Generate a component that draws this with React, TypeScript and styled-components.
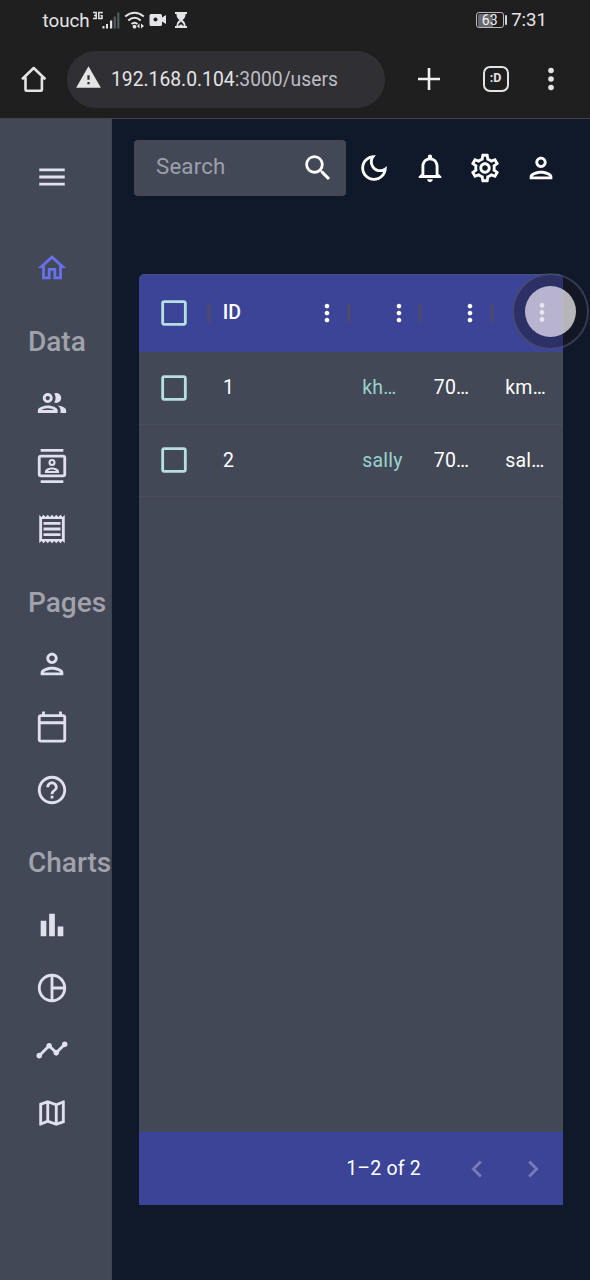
import React from "react";
import styled, { createGlobalStyle } from "styled-components";
import {
  MdMenu, MdOutlineHome, MdOutlinePeople, MdOutlineContacts, MdOutlineReceipt,
  MdOutlinePerson, MdOutlineCalendarToday, MdHelpOutline, MdBarChart,
  MdTimeline, MdOutlineMap, MdSearch, MdNotificationsNone,
  MdOutlineSettings, MdMoreVert, MdCheckBoxOutlineBlank,
  MdChevronLeft, MdChevronRight, MdWarning,
} from "react-icons/md";

const Global = createGlobalStyle`
  * { box-sizing: border-box; }
  body { margin: 0; background: #101929; font-family: Roboto, "Noto Sans", sans-serif; }
  svg { display: block; flex: none; }
`;

const Screen = styled.div`
  width: 590px;
  height: 1280px;
  display: flex;
  flex-direction: column;
  position: relative;
  overflow: hidden;
`;

const PhoneTop = styled.header`
  height: 119px;
  flex: none;
  background: #1f1f1f;
  border-bottom: 1px solid #45424b;
`;

const StatusBar = styled.div`
  height: 40px;
  display: flex;
  align-items: center;
  padding: 0 43px 0 42.5px;
  color: #e4e4e6;
  font-size: 19.6px;
`;

const Carrier = styled.span`
  font-size: 18.8px;
  padding-top: 1px;
`;

const Network = styled.svg`
  margin-left: 2px;
`;

const Clock = styled.span`
  margin-left: 4.5px;
  font-size: 18.6px;
`;

const Battery = styled.div`
  margin-left: auto;
  width: 28px;
  height: 16px;
  border: 1.3px solid #b9b9bd;
  border-radius: 3px;
  font-size: 14px;
  line-height: 13.5px;
  text-align: center;
  color: #f0f0f2;
  background: linear-gradient(90deg, #6a6a6e 63%, transparent 63%);
  background-clip: content-box;
  padding: 0.5px;
`;

const BatteryTip = styled.span`
  width: 2px;
  height: 10px;
  margin-left: 1px;
  border-radius: 1px;
  background: #d4d4d8;
`;

const BrowserBar = styled.div`
  height: 78px;
  display: flex;
  align-items: center;
  padding: 0 29px 0 20px;
  color: #e4e4e6;
`;

const HomeIcon = styled.svg`
  margin-bottom: 3px;
`;

const Address = styled.div`
  width: 318px;
  height: 57px;
  margin-left: 19px;
  padding-left: 8px;
  border-radius: 29px;
  background: #303034;
  display: flex;
  align-items: center;
  gap: 9px;
  font-size: 19.3px;
  svg { margin-bottom: 3px; }
`;

const Dim = styled.span`
  color: #bdbdc3;
`;

const Tabs = styled.div`
  width: 26px;
  height: 26px;
  margin-left: 42.5px;
  border: 2.6px solid #e4e4e6;
  border-radius: 7px;
  font-size: 12.5px;
  font-weight: 700;
  line-height: 19px;
  text-align: center;
`;

const Plus = styled.svg`
  margin-left: 33px;
`;

const Dots = styled.svg`
  margin-left: auto;
  margin-right: 6px;
`;

const Body = styled.div`
  flex: 1;
  display: flex;
  min-height: 0;
`;

const Sidebar = styled.nav`
  width: 112px;
  flex: none;
  background: #434856;
  border-right: 1px solid #3c4250;
  color: #e0e0ee;
  padding-top: 26.4px;
  overflow: hidden;
`;

const NavItem = styled.div<{ $active?: boolean; $first?: boolean }>`
  height: 62.7px;
  width: 104px;
  margin-bottom: ${(p) => (p.$first ? "28.6px" : "0")};
  display: flex;
  align-items: center;
  justify-content: center;
  color: ${(p) => (p.$active ? "#6870ee" : "inherit")};
`;

const NavHeading = styled.h6`
  margin: 0;
  height: 72.7px;
  padding: 5.4px 0 0 28px;
  font-size: 28px;
  font-weight: 500;
  line-height: 74px;
  color: #a1a2ac;
`;

const Main = styled.main`
  flex: 1;
  min-width: 0;
`;

const Topbar = styled.div`
  display: flex;
  align-items: center;
  padding: 21px 22px 0;
  color: #fff;
`;

const SearchBox = styled.div`
  width: 212px;
  flex: none;
  height: 56px;
  border-radius: 4px;
  background: #434856;
  display: flex;
  align-items: center;
  justify-content: space-between;
  padding: 0 11px 0 22px;
  font-size: 22.3px;
  letter-spacing: 0.15px;
  color: #9d9fac;
  svg { color: #fff; }
`;

const SearchLabel = styled.span`
  padding-bottom: 4px;
`;

const IconButton = styled.span<{ $dim?: boolean }>`
  width: 55.75px;
  height: 55.75px;
  flex: none;
  display: flex;
  align-items: center;
  justify-content: center;
  color: ${(p) => (p.$dim ? "#777cb8" : "#fff")};
`;

const Grid = styled.section`
  width: 424px;
  height: 931px;
  margin: 78px 0 0 27px;
  display: flex;
  flex-direction: column;
  background: #434856;
  border-radius: 5.5px 5.5px 0 0;
  overflow: hidden;
  color: #fff;
  font-size: 19.5px;
  letter-spacing: 0.2px;
`;

const columns = "70.3px 139.4px 71.5px 71.5px 71.3px";

const HeadRow = styled.div`
  height: 78px;
  flex: none;
  display: grid;
  grid-template-columns: ${columns};
  background: #3c4497;
  border-top: 1px solid #4b4e83;
  padding-bottom: 2px;
  font-weight: 500;
`;

const HeadCell = styled.div`
  display: flex;
  align-items: center;
  justify-content: space-between;
  padding: 0 7.4px 0 0;
`;

const Separator = styled.i`
  width: 4px;
  height: 20px;
  margin: 0 auto 0 -2px;
  border-radius: 2px;
  background: #4a4875;
`;

const HeadLabel = styled.span`
  flex: 1;
  padding-left: 11.5px;
  letter-spacing: 0;
`;

const Row = styled.div`
  height: 72.5px;
  flex: none;
  display: grid;
  grid-template-columns: ${columns};
  align-items: center;
  border-bottom: 1px solid #4b4d5a;
`;

const CheckCell = styled.div`
  display: flex;
  align-items: center;
  justify-content: center;
  color: #b5dfe1;
`;

const Cell = styled.div<{ $accent?: boolean }>`
  padding: 0 13.6px;
  overflow: hidden;
  white-space: nowrap;
  color: ${(p) => (p.$accent ? "#98d3cd" : "#fff")};
`;

const GridFooter = styled.footer`
  margin-top: auto;
  height: 73px;
  display: flex;
  align-items: center;
  justify-content: flex-end;
  padding-right: 2.5px;
  background: #3c4497;
`;

const Range = styled.span`
  margin-right: 28px;
`;

const TouchHalo = styled.div`
  position: absolute;
  left: 512px;
  top: 273px;
  width: 77px;
  height: 77px;
  border-radius: 50%;
  border: 2px solid rgba(105, 105, 145, 0.42);
  background: rgba(24, 22, 32, 0.42);
  display: flex;
  align-items: center;
  justify-content: center;
`;

const TouchPoint = styled.div`
  width: 51px;
  height: 51px;
  border-radius: 50%;
  background: linear-gradient(90deg, rgba(219, 213, 234, 0.8) 73%, rgba(223, 221, 223, 0.8) 73%);
  display: flex;
  align-items: center;
  padding-left: 3px;
  color: rgba(240, 240, 250, 0.75);
`;

const ICON = 34;

const PieOutline = () => (
  <svg width={ICON} height={ICON} viewBox="0 0 24 24" fill="currentColor">
    <path d="M12 2C6.48 2 2 6.48 2 12s4.48 10 10 10 10-4.48 10-10S17.52 2 12 2zm1 2.07c3.61.45 6.48 3.33 6.93 6.93H13V4.07zM4 12c0-4.06 3.07-7.44 7-7.93v15.87c-3.93-.5-7-3.88-7-7.94zm9 7.93V13h6.93c-.45 3.61-3.32 6.48-6.93 6.93z" />
  </svg>
);

const Moon = () => (
  <svg width={ICON} height={ICON} viewBox="0 0 24 24" fill="currentColor">
    <path d="M9.37 5.51c-.18.64-.27 1.31-.27 1.99 0 4.08 3.32 7.4 7.4 7.4.68 0 1.35-.09 1.99-.27C17.45 17.19 14.93 19 12 19c-3.86 0-7-3.14-7-7 0-2.93 1.81-5.45 4.37-6.49zM12 3c-4.97 0-9 4.03-9 9s4.03 9 9 9 9-4.03 9-9c0-.46-.04-.92-.1-1.36-.98 1.37-2.58 2.26-4.4 2.26-2.98 0-5.4-2.42-5.4-5.4 0-1.81.89-3.42 2.26-4.4-.44-.06-.9-.1-1.36-.1z" />
  </svg>
);

const navGroups = [
  { title: "Data", icons: [MdOutlinePeople, MdOutlineContacts, MdOutlineReceipt] },
  { title: "Pages", icons: [MdOutlinePerson, MdOutlineCalendarToday, MdHelpOutline] },
  { title: "Charts", icons: [MdBarChart, PieOutline, MdTimeline, MdOutlineMap] },
];

const rows = [
  ["1", "kh…", "70…", "km…"],
  ["2", "sally", "70…", "sal…"],
];

export default function App() {
  return (
    <Screen>
      <Global />
      <PhoneTop>
        <StatusBar>
          <Carrier>touch</Carrier>
          <Network width="98" height="24" viewBox="0 0 98 24" fill="#e4e4e6">
            <g fill="none" stroke="#e4e4e6" strokeWidth="1.5">
              <path d="M1 4.5h3.200v6H1M2 7.500h2.200M10 5.500V4.500H6.800v6H10V7.800H8.500" />
            </g>
            <rect x="10.500" y="18" width="2" height="2.500" />
            <rect x="14" y="16" width="2" height="4.500" />
            <rect x="18" y="12.500" width="2.200" height="8" />
            <rect x="21.700" y="8.500" width="2.200" height="12" fill="#515c60" />
            <rect x="25.200" y="4.500" width="2.200" height="16" fill="#515c60" />
            <g fill="none" stroke="#e4e4e6" strokeWidth="2">
              <path d="M33.200 8.500q9.300-7.500 18.600 0M36.300 12.500q6.200-5.500 12.400 0M39.500 16q3-2.500 6 0" />
            </g>
            <circle cx="42.500" cy="18.700" r="1.900" />
            <path d="M47.500 15.500v5l-2.500-2.500zM49 15.500v5l3-2.500z" />
            <path fillRule="evenodd" d="M59 6h9.500q1.500 0 1.500 1.500v2l4-2.500v9l-4-2.500v3q0 1.500-1.500 1.500h-9.500q-1.500 0-1.500-1.500v-9q0-1.500 1.500-1.500zM63.500 9.500a2 2 0 1 0 .01 0z" />
            <path fillRule="evenodd" d="M83 4h12v2h-1.500q0 4-3 6 3 2 3 6H95v2H83v-2h1.500q0-4 3-6-3-2-3-6H83zM89 13.500q-2.800 2-2.800 4.700l2.800-2 2.800 2q0-2.700-2.800-4.700z" />
          </Network>
          <Battery>63</Battery>
          <BatteryTip />
          <Clock>7:31</Clock>
        </StatusBar>
        <BrowserBar>
          <HomeIcon width="28" height="28" viewBox="0 0 28 28" fill="none" stroke="#e4e4e6" strokeWidth="2.6" strokeLinejoin="round">
            <path d="M2 15.200 13.700 4l11.700 11.200M5.500 13.200v12.500q0 1 1 1h14.400q1 0 1-1V13.200" />
          </HomeIcon>
          <Address>
            <MdWarning size={27} />
            <span>192.168.0.104<Dim>:3000/users</Dim></span>
          </Address>
          <Plus width="22" height="24" viewBox="0 0 22 24" stroke="#f0f0f2" strokeWidth="2.6">
            <path d="M11 1v22M0 12h22" />
          </Plus>
          <Tabs>:D</Tabs>
          <Dots width="8" height="24" viewBox="0 0 8 24" fill="#e4e4e6">
            <circle cx="4" cy="3.5" r="2.800" />
            <circle cx="4" cy="12" r="2.800" />
            <circle cx="4" cy="20.500" r="2.800" />
          </Dots>
        </BrowserBar>
      </PhoneTop>
      <Body>
        <Sidebar>
          <NavItem $first><MdMenu size={ICON} /></NavItem>
          <NavItem $active><MdOutlineHome size={ICON} /></NavItem>
          {navGroups.map((group) => (
            <React.Fragment key={group.title}>
              <NavHeading>{group.title}</NavHeading>
              {group.icons.map((Icon, i) => (
                <NavItem key={i}><Icon size={ICON} /></NavItem>
              ))}
            </React.Fragment>
          ))}
        </Sidebar>
        <Main>
          <Topbar>
            <SearchBox><SearchLabel>Search</SearchLabel><MdSearch size={ICON} /></SearchBox>
            <IconButton><Moon /></IconButton>
            <IconButton><MdNotificationsNone size={ICON} /></IconButton>
            <IconButton><MdOutlineSettings size={ICON} /></IconButton>
            <IconButton><MdOutlinePerson size={ICON} /></IconButton>
          </Topbar>
          <Grid>
            <HeadRow>
              <CheckCell><MdCheckBoxOutlineBlank size={ICON} /></CheckCell>
              {["ID", "", "", ""].map((label, i) => (
                <HeadCell key={i}>
                  <Separator />
                  <HeadLabel>{label}</HeadLabel>
                  <MdMoreVert size={28} />
                </HeadCell>
              ))}
            </HeadRow>
            {rows.map((row) => (
              <Row key={row[0]}>
                <CheckCell><MdCheckBoxOutlineBlank size={ICON} /></CheckCell>
                {row.map((value, i) => (
                  <Cell key={i} $accent={i === 1}>{value}</Cell>
                ))}
              </Row>
            ))}
            <GridFooter>
              <Range>1–2 of 2</Range>
              <IconButton $dim><MdChevronLeft size={ICON} /></IconButton>
              <IconButton $dim><MdChevronRight size={ICON} /></IconButton>
            </GridFooter>
          </Grid>
        </Main>
      </Body>
      <TouchHalo><TouchPoint><MdMoreVert size={28} /></TouchPoint></TouchHalo>
    </Screen>
  );
}
